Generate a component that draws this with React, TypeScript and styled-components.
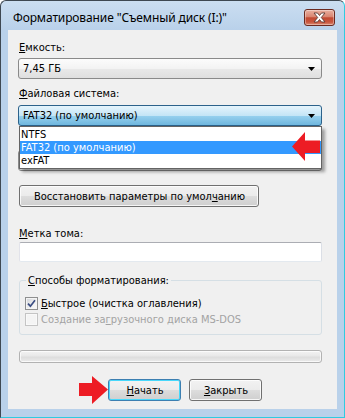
import React from 'react';
import styled, { createGlobalStyle, css } from 'styled-components';

const GlobalStyle = createGlobalStyle`
  html, body {
    margin: 0;
    padding: 0;
    background: #ffffff;
  }
  body {
    font-family: "DejaVu Sans Condensed", "Liberation Sans", sans-serif;
    font-size: 11px;
    color: #000000;
  }
`;

const Window = styled.div`
  width: 345px;
  height: 418px;
  box-sizing: border-box;
  display: flex;
  flex-direction: column;
  padding: 0 7px 8px 7px;
  border: 1px solid #3e4852;
  border-right-color: #30cbe0;
  border-bottom-color: #30cbe0;
  border-radius: 6px 6px 0 0;
  background: linear-gradient(#cbdef1 0px, #b9d1ea 29px, #b9d1ea 100%);
`;

const TitleBar = styled.div`
  height: 29px;
  flex: none;
  display: flex;
  justify-content: space-between;
  align-items: flex-start;
  padding-left: 5px;
  padding-right: 2px;
`;

const Caption = styled.span`
  font-family: "Noto Sans", "Open Sans", sans-serif;
  font-size: 12px;
  line-height: 16px;
  letter-spacing: -0.12px;
  margin-top: 9px;
  white-space: nowrap;
`;

const CloseButton = styled.div`
  width: 31px;
  height: 17px;
  margin-top: 8px;
  box-sizing: border-box;
  border: 1px solid #6b2a20;
  border-radius: 3px;
  display: flex;
  align-items: center;
  justify-content: center;
  background: linear-gradient(#eab1a1 0%, #d98571 45%, #c24a33 52%, #c8553d 80%, #dc8d75 100%);
  box-shadow: inset 0 0 0 1px rgba(255, 255, 255, 0.35);
`;

const Client = styled.div`
  position: relative;
  flex: 1;
  display: flex;
  flex-direction: column;
  align-items: stretch;
  padding: 11px 15px 0 11px;
  background: #f0f0f0;
`;

const Label = styled.div<{ $gap: number }>`
  height: 13px;
  line-height: 13px;
  margin-top: ${(p) => p.$gap}px;
  white-space: nowrap;
`;

const Key = styled.span`
  text-decoration: underline;
  text-underline-offset: 1px;
`;

const ComboWrap = styled.div<{ $gap: number }>`
  position: relative;
  margin-top: ${(p) => p.$gap}px;
  margin-left: -1px;
`;

const Combo = styled.div<{ $active?: boolean }>`
  height: 21px;
  box-sizing: border-box;
  display: flex;
  align-items: center;
  justify-content: space-between;
  padding: 0 6px 0 4px;
  border: 1px solid #8a8a8a;
  border-radius: 3px;
  background: linear-gradient(#fcfcfc 0%, #f3f3f3 50%, #e9e9e9 50%, #dfdfdf 100%);
  ${(p) =>
    p.$active &&
    css`
      border-color: #2c628b;
      background: linear-gradient(#e5f4fc 0%, #c4e5f6 50%, #98d1ef 50%, #6fb7de 100%);
    `}
`;

const DropList = styled.div`
  position: absolute;
  top: 21px;
  left: 1px;
  right: 0;
  z-index: 2;
  padding: 1px 0;
  border: 1px solid #646464;
  background: #ffffff;
  box-shadow: 3px 3px 3px rgba(0, 0, 0, 0.35);
`;

const ListItem = styled.div<{ $selected?: boolean }>`
  height: 13px;
  line-height: 13px;
  padding-left: 1px;
  white-space: nowrap;
  ${(p) =>
    p.$selected &&
    css`
      background: #3399ff;
      color: #ffffff;
    `}
`;

const PushButton = styled.div<{ $default?: boolean; $width?: number; $gap?: number }>`
  height: 22px;
  width: ${(p) => (p.$width ? `${p.$width}px` : 'auto')};
  align-self: flex-start;
  margin-top: ${(p) => p.$gap ?? 0}px;
  box-sizing: border-box;
  display: flex;
  align-items: center;
  justify-content: center;
  padding: 0 13px 0 14px;
  border: 1px solid #707070;
  border-radius: 3px;
  white-space: nowrap;
  background: linear-gradient(#f2f2f2 0%, #ebebeb 50%, #dddddd 50%, #cfcfcf 100%);
  box-shadow: inset 0 0 0 1px rgba(255, 255, 255, 0.8);
  ${(p) =>
    p.$default &&
    css`
      border-color: #3c7fb1;
      box-shadow: inset 0 0 0 1px #48d8fb;
    `}
`;

const TextBox = styled.div<{ $gap: number }>`
  height: 20px;
  margin-top: ${(p) => p.$gap}px;
  box-sizing: border-box;
  border: 1px solid;
  border-color: #abadb3 #dbdfe6 #e3e9ef #e2e3ea;
  border-radius: 2px;
  background: #ffffff;
`;

const Group = styled.div<{ $gap: number }>`
  margin-top: ${(p) => p.$gap}px;
  display: flex;
  flex-direction: column;
  padding: 0 0 7px 5px;
  border: 1px solid #d5dfe5;
  border-radius: 3px;
`;

const GroupTitle = styled.div`
  align-self: flex-start;
  height: 13px;
  line-height: 13px;
  margin: -7px 0 0 1px;
  padding: 0 2px;
  background: #f0f0f0;
`;

const CheckRow = styled.div<{ $disabled?: boolean; $gap?: number }>`
  height: 16px;
  margin-top: ${(p) => p.$gap ?? 0}px;
  display: flex;
  align-items: center;
  gap: 3px;
  white-space: nowrap;
  color: ${(p) => (p.$disabled ? '#a3a3a3' : '#000000')};
`;

const CheckBox = styled.div<{ $disabled?: boolean }>`
  width: 13px;
  height: 13px;
  flex: none;
  box-sizing: border-box;
  display: flex;
  align-items: center;
  justify-content: center;
  border: 1px solid #8e8f8f;
  background: linear-gradient(135deg, #d0d3d8 0%, #f0f0f0 60%, #fafafa 100%);
  box-shadow: inset 0 0 0 1px #f4f4f4;
  ${(p) =>
    p.$disabled &&
    css`
      border-color: #c4c4c4;
      background: #f4f4f4;
      box-shadow: inset 0 0 0 1px #f9f9f9;
    `}
`;

const Progress = styled.div<{ $gap: number }>`
  height: 13px;
  margin-top: ${(p) => p.$gap}px;
  box-sizing: border-box;
  border: 1px solid #b2b2b2;
  border-radius: 3px;
  background: linear-gradient(#f3f3f3 0%, #e8e8e8 45%, #dddddd 55%, #ebebeb 100%);
  box-shadow: inset 0 0 0 1px rgba(255, 255, 255, 0.7);
`;

const ButtonRow = styled.div<{ $gap: number }>`
  display: flex;
  gap: 8px;
  margin-top: ${(p) => p.$gap}px;
  padding-left: 89px;
`;

const Pointer = styled.svg<{ $left: number; $top: number }>`
  position: absolute;
  left: ${(p) => p.$left}px;
  top: ${(p) => p.$top}px;
  z-index: 3;
`;

function ComboArrow() {
  return (
    <svg width="7" height="4" viewBox="0 0 7 4">
      <path d="M0 0 H7 L3.5 4 Z" fill="#000000" />
    </svg>
  );
}

function CloseGlyph() {
  return (
    <svg width="13" height="11" viewBox="0 0 13 11">
      <path
        d="M1 1 H4.5 L6.5 3.5 L8.5 1 H12 L8.3 5.5 L12 10 H8.5 L6.5 7.5 L4.5 10 H1 L4.7 5.5 Z"
        fill="#ffffff"
        stroke="#5a3a36"
        strokeWidth="0.9"
        strokeLinejoin="round"
      />
    </svg>
  );
}

function Tick() {
  return (
    <svg width="9" height="9" viewBox="0 0 9 9">
      <path d="M1 4.6 L3.4 7.2 L8 1.2" fill="none" stroke="#3a4d82" strokeWidth="1.7" />
    </svg>
  );
}

export default function App() {
  return (
    <>
      <GlobalStyle />
      <Window>
        <TitleBar>
          <Caption>Форматирование "Съемный диск (I:)"</Caption>
          <CloseButton>
            <CloseGlyph />
          </CloseButton>
        </TitleBar>
        <Client>
          <Label $gap={0}>
            <Key>Е</Key>мкость:
          </Label>
          <ComboWrap $gap={4}>
            <Combo>
              <span>7,45 ГБ</span>
              <ComboArrow />
            </Combo>
          </ComboWrap>

          <Label $gap={8}>
            <Key>Ф</Key>айловая система:
          </Label>
          <ComboWrap $gap={5}>
            <Combo $active>
              <span>FAT32 (по умолчанию)</span>
              <ComboArrow />
            </Combo>
            <DropList>
              <ListItem>NTFS</ListItem>
              <ListItem $selected>FAT32 (по умолчанию)</ListItem>
              <ListItem>exFAT</ListItem>
            </DropList>
          </ComboWrap>

          {/* allocation unit combo, covered by the open list */}
          <ComboWrap $gap={24}>
            <Combo />
          </ComboWrap>

          <PushButton $gap={14}>
            Восстановить параметры по умол<Key>ч</Key>анию
          </PushButton>

          <Label $gap={20}>
            <Key>М</Key>етка тома:
          </Label>
          <TextBox $gap={2} />

          <Group $gap={18}>
            <GroupTitle>
              <Key>С</Key>пособы форматирования:
            </GroupTitle>
            <CheckRow $gap={8}>
              <CheckBox>
                <Tick />
              </CheckBox>
              <span>
                <Key>Б</Key>ыстрое (очистка оглавления)
              </span>
            </CheckRow>
            <CheckRow $disabled>
              <CheckBox $disabled />
              <span>
                Создание за<Key>г</Key>рузочного диска MS-DOS
              </span>
            </CheckRow>
          </Group>

          <Progress $gap={15} />

          <ButtonRow $gap={16}>
            <PushButton $default $width={73}>
              <span>
                <Key>Н</Key>ачать
              </span>
            </PushButton>
            <PushButton $width={73}>
              <span>
                <Key>З</Key>акрыть
              </span>
            </PushButton>
          </ButtonRow>

          <Pointer $left={284} $top={102} width="29" height="29" viewBox="0 0 29 29">
            <path d="M0 14.5 L13 0 V8.5 H28 V21 H13 V29 Z" fill="#ed1c24" />
          </Pointer>
          <Pointer $left={71} $top={346} width="29" height="28" viewBox="0 0 29 28">
            <path d="M0 7 H13 V0 L29 13.5 L13 28 V20 H0 Z" fill="#ed1c24" />
          </Pointer>
        </Client>
      </Window>
    </>
  );
}
